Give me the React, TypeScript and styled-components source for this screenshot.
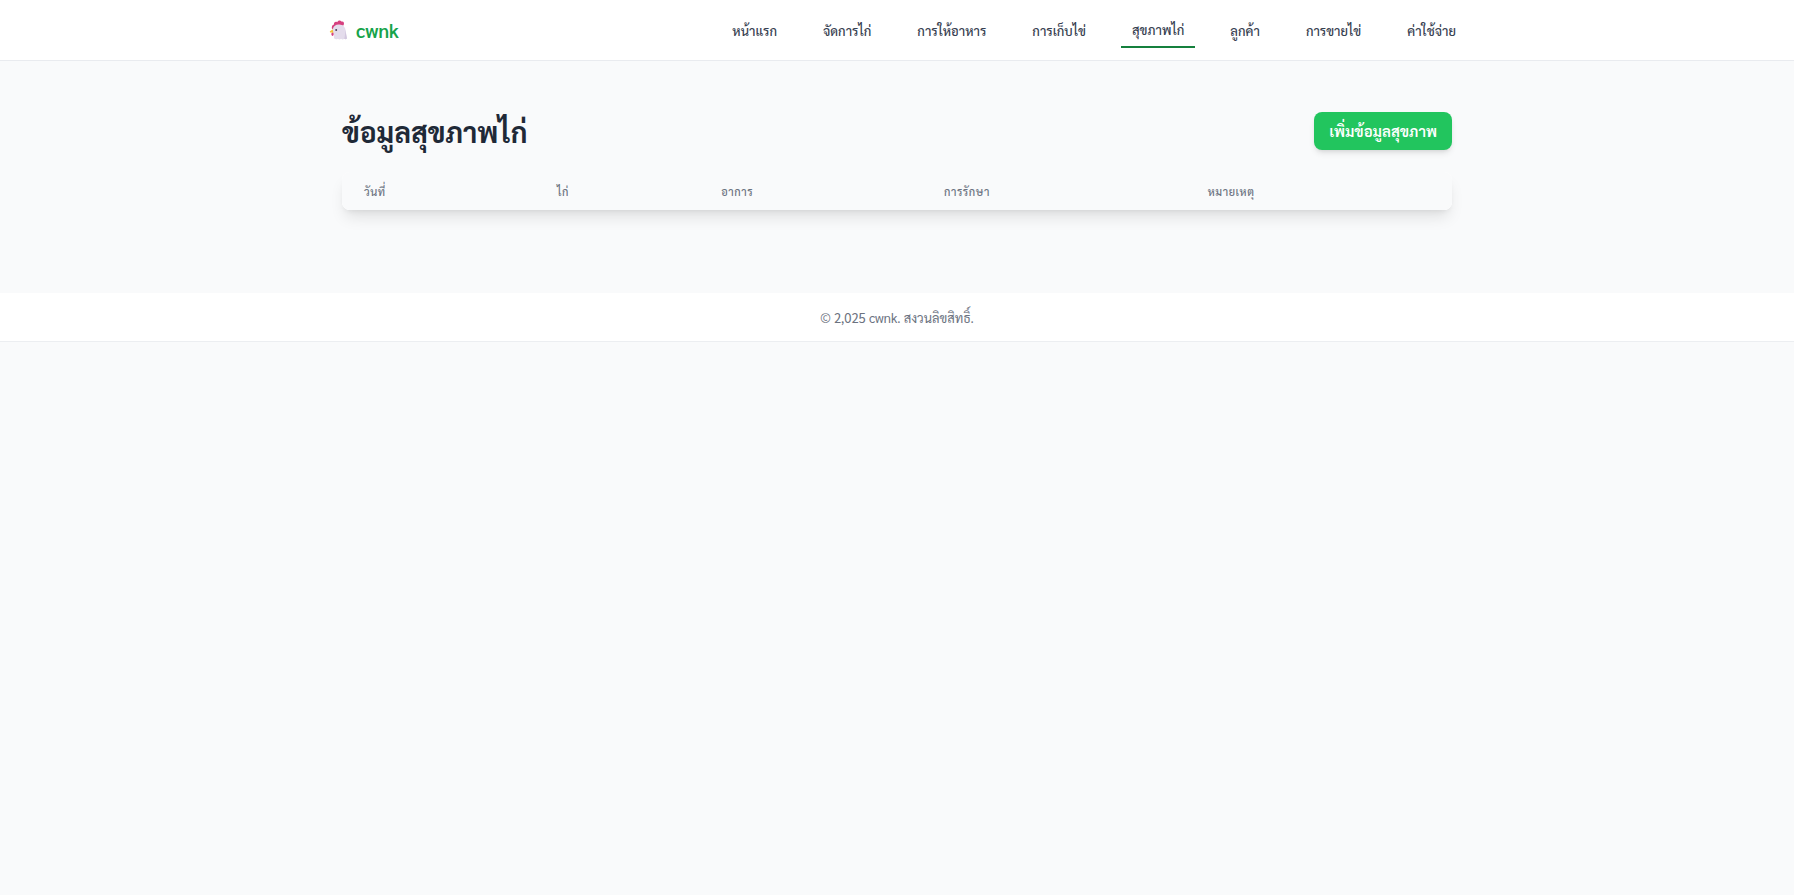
import React from "react";
import styled, { createGlobalStyle } from "styled-components";

const GlobalStyle = createGlobalStyle`
  *, *::before, *::after { box-sizing: border-box; }
  html { background: #f9fafb; }
  body {
    margin: 0;
    color: #1f2937;
    font-family: Sarabun, "Noto Sans", sans-serif;
    font-size: 15px;
    line-height: 24px;
  }
`;

const Header = styled.header`
  background: #ffffff;
  border-bottom: 1px solid #e9ebef;
`;

const HeaderInner = styled.div`
  display: flex;
  align-items: center;
  justify-content: space-between;
  max-width: 1200px;
  min-height: 60px;
  margin: 0 auto;
  padding: 0 30px;
`;

const Brand = styled.a`
  display: flex;
  align-items: center;
  gap: 8px;
  color: #16a34a;
  font-size: 19px;
  font-weight: 600;
  line-height: 26px;
  text-decoration: none;
`;

const Nav = styled.nav`
  display: flex;
  align-items: center;
  gap: 24px;
`;

const NavLink = styled.a<{ $active?: boolean }>`
  padding: 8px 11px 6px;
  border-bottom: ${(p) => (p.$active ? "2px solid #15803d" : "0")};
  color: #374151;
  font-size: 13px;
  font-weight: 500;
  line-height: 20px;
  text-decoration: none;
  white-space: nowrap;
`;

const Main = styled.main`
  max-width: 1200px;
  margin: 0 auto 32px;
  padding: 51px 45px;
`;

const TitleRow = styled.div`
  display: flex;
  align-items: center;
  justify-content: space-between;
  margin-bottom: 22px;
`;

const Title = styled.h1`
  margin: 0;
  font-size: 28px;
  font-weight: 700;
  line-height: 34px;
`;

const AddButton = styled.button`
  padding: 7px 15px;
  border: 0;
  border-radius: 8px;
  background: #22c55e;
  box-shadow: 0 4px 6px -1px rgba(0, 0, 0, 0.1), 0 2px 4px -2px rgba(0, 0, 0, 0.1);
  color: #ffffff;
  font: inherit;
  font-weight: 600;
  cursor: pointer;
`;

const TableCard = styled.div`
  overflow: hidden;
  border-radius: 8px;
  box-shadow: 0 10px 15px -3px rgba(0, 0, 0, 0.1), 0 4px 6px -4px rgba(0, 0, 0, 0.1);
`;

const Table = styled.table`
  width: 100%;
  border-collapse: collapse;
  background: #ffffff;
`;

const HeadCell = styled.th`
  padding: 12px 22px 10px;
  background: #f9fafb;
  color: #6b7280;
  font-size: 11px;
  font-weight: 500;
  letter-spacing: 0.05em;
  line-height: 16px;
  text-align: left;
`;

const Footer = styled.footer`
  padding: 15px 15px 14px;
  border-bottom: 1px solid #eceef1;
  background: #ffffff;
  color: #6b7280;
  font-size: 13px;
  line-height: 19px;
  text-align: center;
`;

const ChickenIcon = () => (
  <svg width="21" height="22" viewBox="-2 -1 21 22" aria-hidden="true">
    <path d="M3 9C2.4 6.6 3.2 4.6 5 4.4C4.6 2.4 6.6 1 8.2 2.2C9 .2 11.5 0 12.4 1.6C14.8 1 15.8 3.4 14.4 5.4L9 6.4L5 8.6Z" fill="#d6407f" />
    <path d="M3.3 12.3C2 13 2 15.5 3.4 16C4.8 15.7 5.1 13.6 4.6 12.4Z" fill="#d6407f" />
    <path d="M4.6 8.8L1 11.2C.6 12 1 12.6 2 12.6L5 12.8Z" fill="#f3c33c" />
    <path d="M4 9C4.4 6 7 4.4 10.2 4.6C14.2 4.8 16.2 7.2 16.8 11C17.1 13.3 17.5 16 18 18.6C17 19.6 16 19.4 15.2 18.8C14.2 19.7 13 19.6 12.1 18.8C11.1 19.6 9.8 19.6 8.9 18.8C7.6 19.6 6.2 19.4 5.2 18.6C4.6 17 5 15.5 4.8 13.9C4.5 12.3 3.7 11.2 4 9Z" fill="#e4dcec" />
    <path d="M16.2 10C17 13 17.4 16 18 18.6C17 19.6 16 19.4 15.2 18.8C16 16 16.2 13 16.2 10Z" fill="#d3c8df" />
    <circle cx="7.2" cy="10" r="1" fill="#4b3f58" />
  </svg>
);

const navItems = ["หน้าแรก", "จัดการไก่", "การให้อาหาร", "การเก็บไข่", "สุขภาพไก่", "ลูกค้า", "การขายไข่", "ค่าใช้จ่าย"];
const activeItem = "สุขภาพไก่";
const columns = ["วันที่", "ไก่", "อาการ", "การรักษา", "หมายเหตุ"];

export default function App() {
  return (
    <>
      <GlobalStyle />
      <Header>
        <HeaderInner>
          <Brand href="#">
            <ChickenIcon />
            cwnk
          </Brand>
          <Nav>
            {navItems.map((item) => (
              <NavLink
                key={item}
                href="#"
                $active={item === activeItem}
                aria-current={item === activeItem ? "page" : undefined}
              >
                {item}
              </NavLink>
            ))}
          </Nav>
        </HeaderInner>
      </Header>
      <Main>
        <TitleRow>
          <Title>ข้อมูลสุขภาพไก่</Title>
          <AddButton type="button">เพิ่มข้อมูลสุขภาพ</AddButton>
        </TitleRow>
        <TableCard>
          <Table>
            <thead>
              <tr>
                {columns.map((column) => (
                  <HeadCell key={column} scope="col">
                    {column}
                  </HeadCell>
                ))}
              </tr>
            </thead>
            <tbody />
          </Table>
        </TableCard>
      </Main>
      <Footer>© 2,025 cwnk. สงวนลิขสิทธิ์.</Footer>
    </>
  );
}
